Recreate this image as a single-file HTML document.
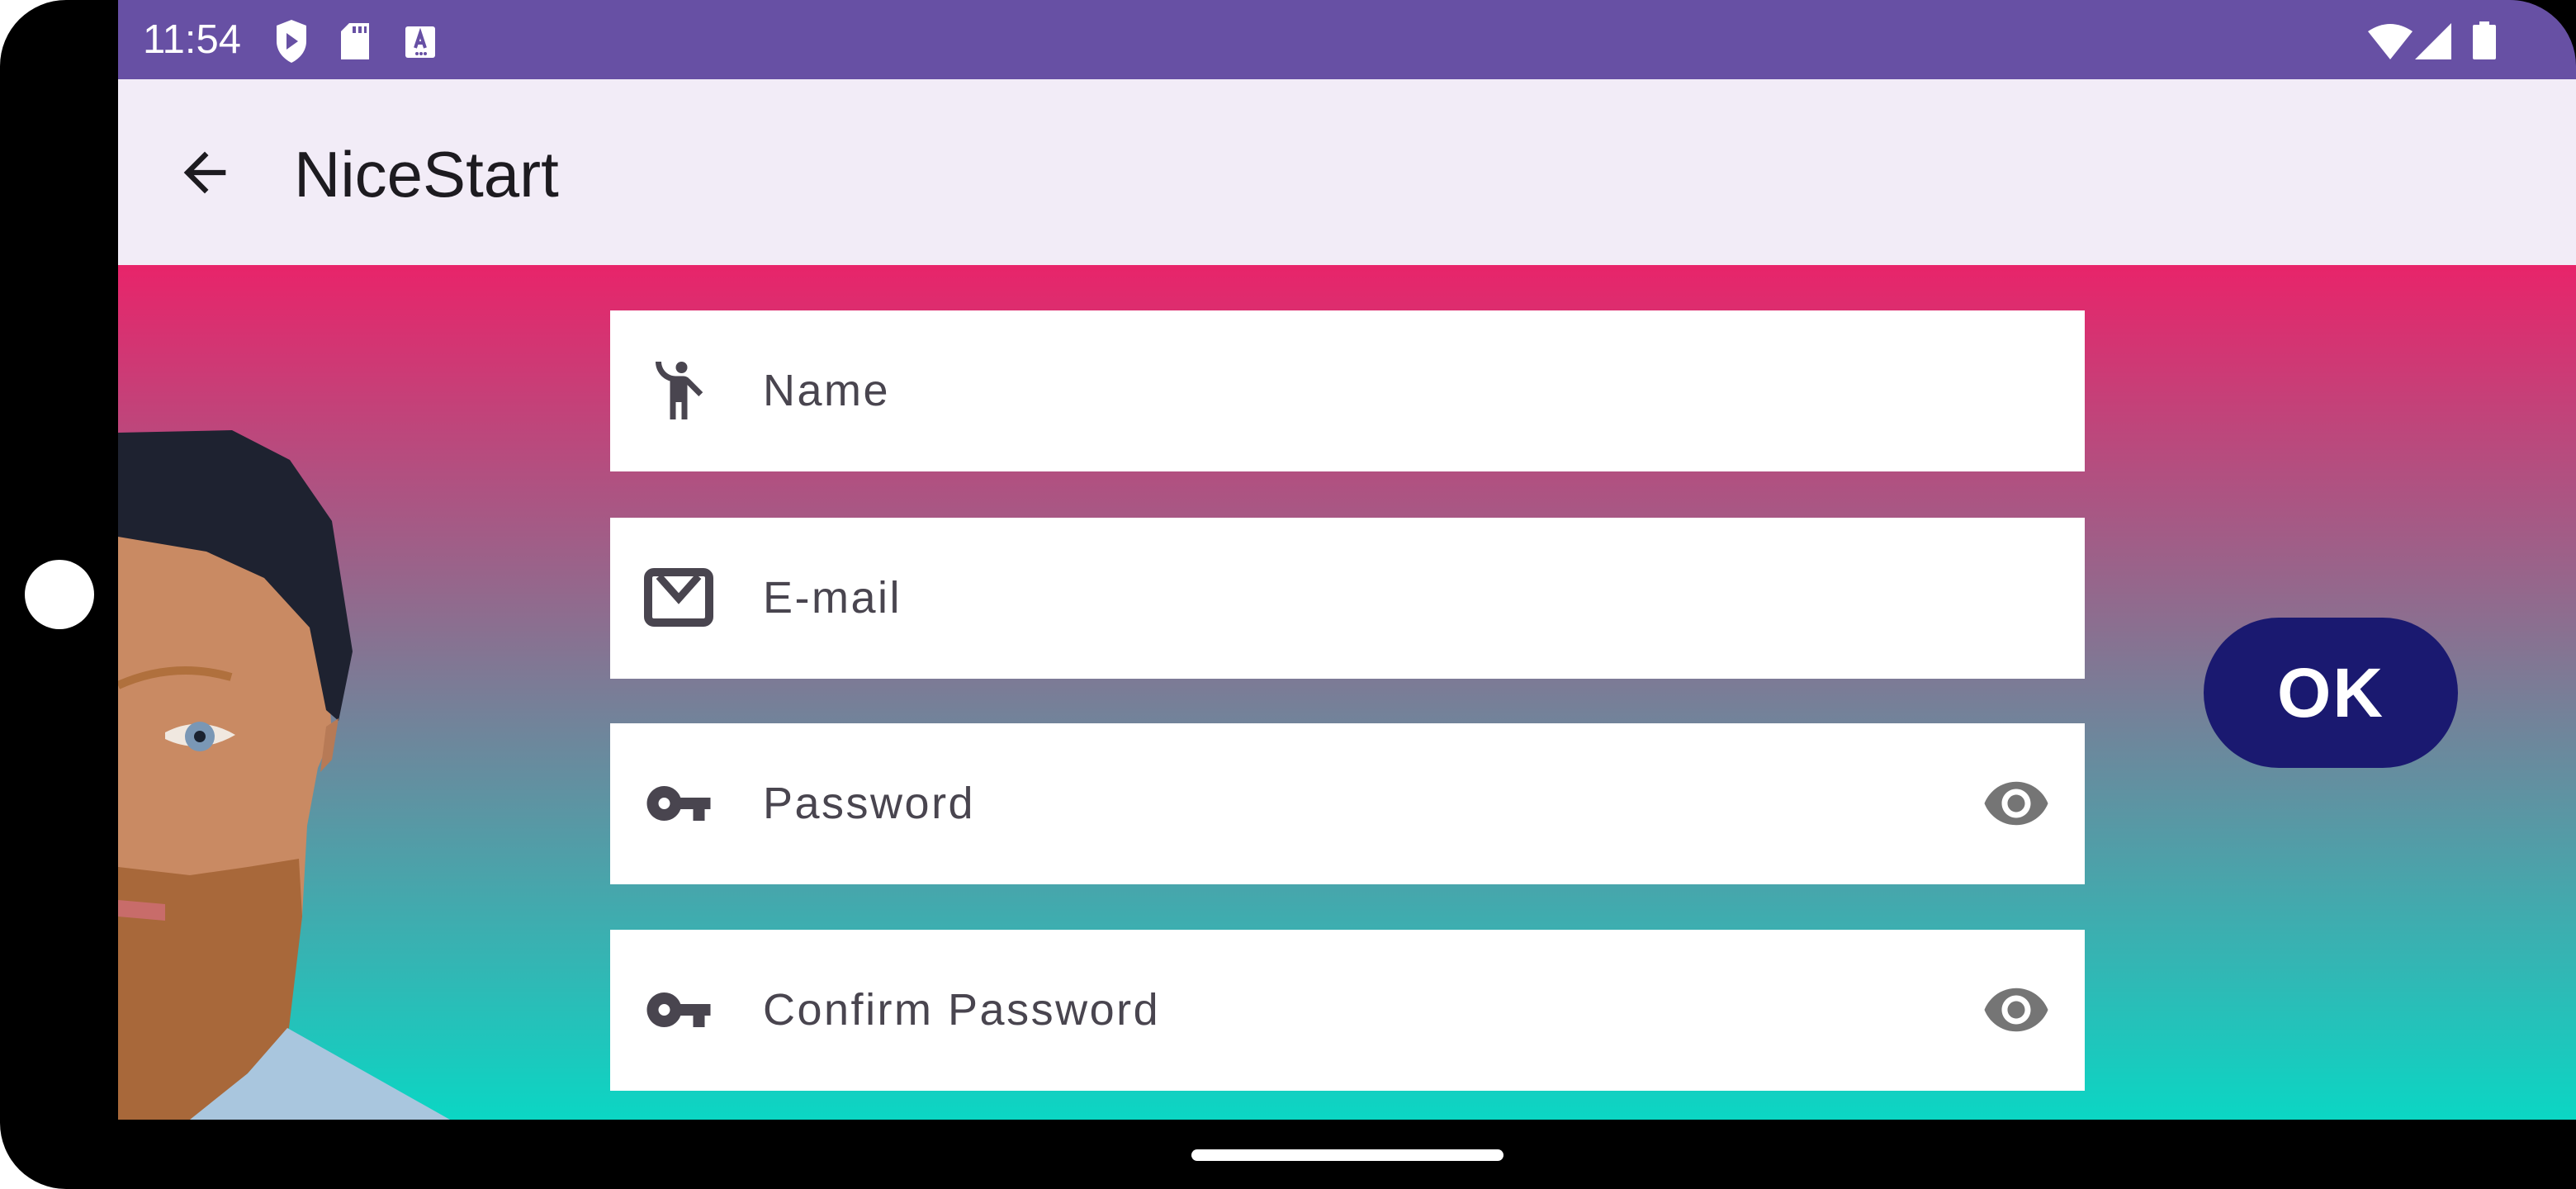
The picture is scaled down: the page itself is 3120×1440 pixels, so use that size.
<!DOCTYPE html>
<html><head><meta charset="utf-8"><style>
html,body{margin:0;padding:0;width:3120px;height:1440px;overflow:hidden;background:#fff;font-family:"Liberation Sans",Roboto,sans-serif}
.dev{position:absolute;left:0;top:0;width:3120px;height:1440px;background:#000;border-radius:80px 0 0 80px}
.sb{position:absolute;left:143px;top:0;width:2977px;height:96px;background:#6750A4;border-top-right-radius:80px}
.ab{position:absolute;left:143px;top:96px;width:2977px;height:225px;background:#F2ECF7}
.gr{position:absolute;left:143px;top:321px;width:2977px;height:1035px;background:linear-gradient(#E8246A,#0BD6C4)}
.f{position:absolute;left:739px;width:1786px;height:195px;background:#fff}
.f .t{position:absolute;left:185px;top:0;line-height:195px;font-size:54px;color:#49454F;letter-spacing:2.5px}
.f svg.i{position:absolute;left:41px;top:55px}
.f svg.e{position:absolute;left:1661px;top:55px}
</style></head><body>
<div class="dev"></div>
<div style="position:absolute;left:30px;top:678px;width:84px;height:84px;border-radius:50%;background:#fff"></div>
<div class="sb">
 <div style="position:absolute;left:30px;top:20px;font-size:49px;color:#fff;line-height:56px">11:54</div>
 <svg style="position:absolute;left:190px;top:24px" width="40" height="52" viewBox="0 0 40 52"><path d="M20 0L38 7V26C38 38 30 47 20 52C10 47 2 38 2 26V7Z" fill="#fff"/><path d="M14 16L28 26L14 36Z" fill="#6750A4"/></svg>
 <svg style="position:absolute;left:270px;top:28px" width="36" height="44" viewBox="0 0 36 44"><path d="M10 0H34V44H0V10Z" fill="#fff"/><rect x="14" y="4" width="4" height="8" fill="#6750A4"/><rect x="21" y="4" width="4" height="8" fill="#6750A4"/><rect x="28" y="4" width="3" height="8" fill="#6750A4"/></svg>
 <svg style="position:absolute;left:348px;top:32px" width="36" height="38" viewBox="0 0 36 38"><rect width="36" height="38" rx="3" fill="#fff"/><path d="M12 26L18 8L24 26M14 20H22" stroke="#6750A4" stroke-width="4" fill="none"/><circle cx="14" cy="33" r="2" fill="#6750A4"/><circle cx="19" cy="33" r="2" fill="#6750A4"/><circle cx="24" cy="33" r="2" fill="#6750A4"/></svg>
 <svg style="position:absolute;left:2725px;top:28px" width="54" height="44" viewBox="0 0 54 44"><path d="M0 10Q27 -8 54 10L27 44Z" fill="#fff"/></svg>
 <svg style="position:absolute;left:2782px;top:28px" width="44" height="44"><path d="M44 0V44H0Z" fill="#fff"/></svg>
 <svg style="position:absolute;left:2852px;top:26px" width="28" height="46"><rect x="8" y="0" width="12" height="5" fill="#fff"/><rect x="0" y="4" width="28" height="42" rx="2" fill="#fff"/></svg>
</div>
<div class="ab">
 <svg style="position:absolute;left:67px;top:75px" width="76" height="76" viewBox="0 0 24 24"><path d="M20 11H7.83l5.59-5.59L12 4l-8 8 8 8 1.41-1.41L7.83 13H20v-2z" fill="#1D1B20"/></svg>
 <div style="position:absolute;left:213px;top:70px;font-size:78px;line-height:90px;color:#1D1B20">NiceStart</div>
</div>
<div class="gr"></div>
<svg style="position:absolute;left:143px;top:500px" width="420" height="856" viewBox="143 500 420 856">
 <path d="M143 1000L143 620L260 640L360 700L395 780L402 890L385 930L372 1000L366 1110L348 1245L250 1300L143 1300Z" fill="#C98A63"/>
 <path d="M143 1050L230 1060L300 1050L362 1040L366 1110L350 1245L300 1300L240 1356L143 1356Z" fill="#A8683A"/>
 <path d="M143 1090L200 1095L200 1115L143 1110Z" fill="#C86C6A"/>
 <path d="M348 1245L545 1356L230 1356L300 1300Z" fill="#A9C6DE"/>
 <path d="M143 524L281 521L351 557L402 631L427 789L410 873L395 860L375 760L320 700L250 668L143 650Z" fill="#1E2230"/>
 <path d="M395 880L410 870L402 920L388 935Z" fill="#B77A56"/>
 <path d="M200 887Q242 865 285 890Q242 915 200 895Z" fill="#F0E8E0"/>
 <circle cx="242" cy="892" r="18" fill="#7A97B5"/><circle cx="242" cy="892" r="7" fill="#1A2230"/>
 <path d="M143 830Q210 800 280 820" stroke="#B0703D" stroke-width="10" fill="none"/>
</svg>
<div class="f" style="top:376px">
 <svg class="i" width="84" height="84" viewBox="0 0 24 24"><circle cx="13" cy="4" r="2" fill="#49454F"/><path d="M15.89 8.11C15.5 7.72 14.83 7 13.53 7h-2.54C8.24 6.99 6 4.75 6 2H4c0 3.16 2.11 5.84 5 6.71V22h2v-6h2v6h2V10.05L18.95 14l1.41-1.41-4.47-4.48z" fill="#49454F"/></svg>
 <div class="t">Name</div>
</div>
<div class="f" style="top:627px">
 <svg class="i" width="84" height="84" viewBox="0 0 84 84"><rect x="5" y="11" width="74" height="61" rx="7" fill="none" stroke="#49454F" stroke-width="10"/><path d="M18 16L42 43L66 16" fill="none" stroke="#49454F" stroke-width="9"/></svg>
 <div class="t">E-mail</div>
</div>
<div class="f" style="top:876px">
 <svg class="i" width="84" height="84" viewBox="0 0 24 24"><path d="M12.65 10C11.83 7.67 9.61 6 7 6c-3.31 0-6 2.69-6 6s2.69 6 6 6c2.61 0 4.83-1.67 5.65-4H17v4h4v-4h2v-4H12.65zM7 14c-1.1 0-2-.9-2-2s.9-2 2-2 2 .9 2 2-.9 2-2 2z" fill="#49454F"/></svg>
 <div class="t">Password</div>
 <svg class="e" width="84" height="84" viewBox="0 0 24 24"><path d="M12 4.5C7 4.5 2.73 7.61 1 12c1.730 4.39 6 7.5 11 7.5s9.27-3.11 11-7.5c-1.73-4.39-6-7.5-11-7.5zM12 17c-2.76 0-5-2.24-5-5s2.240-5 5-5 5 2.24 5 5-2.24 5-5 5zm0-8c-1.66 0-3 1.34-3 3s1.34 3 3 3 3-1.34 3-3-1.34-3-3-3z" fill="#757575"/></svg>
</div>
<div class="f" style="top:1126px">
 <svg class="i" width="84" height="84" viewBox="0 0 24 24"><path d="M12.65 10C11.83 7.67 9.61 6 7 6c-3.31 0-6 2.69-6 6s2.69 6 6 6c2.61 0 4.83-1.67 5.65-4H17v4h4v-4h2v-4H12.65zM7 14c-1.1 0-2-.9-2-2s.9-2 2-2 2 .9 2 2-.9 2-2 2z" fill="#49454F"/></svg>
 <div class="t">Confirm Password</div>
 <svg class="e" width="84" height="84" viewBox="0 0 24 24"><path d="M12 4.5C7 4.5 2.73 7.61 1 12c1.730 4.39 6 7.5 11 7.5s9.27-3.11 11-7.5c-1.73-4.39-6-7.5-11-7.5zM12 17c-2.76 0-5-2.24-5-5s2.240-5 5-5 5 2.24 5 5-2.24 5-5 5zm0-8c-1.66 0-3 1.34-3 3s1.34 3 3 3 3-1.34 3-3-1.34-3-3-3z" fill="#757575"/></svg>
</div>
<div style="position:absolute;left:2669px;top:748px;width:308px;height:182px;border-radius:91px;background:#1A1970;color:#fff;font-size:84px;font-weight:bold;line-height:182px;text-align:center;letter-spacing:2px">OK</div>
<div style="position:absolute;left:1443px;top:1392px;width:378px;height:14px;border-radius:7px;background:#fff"></div>
</body></html>
